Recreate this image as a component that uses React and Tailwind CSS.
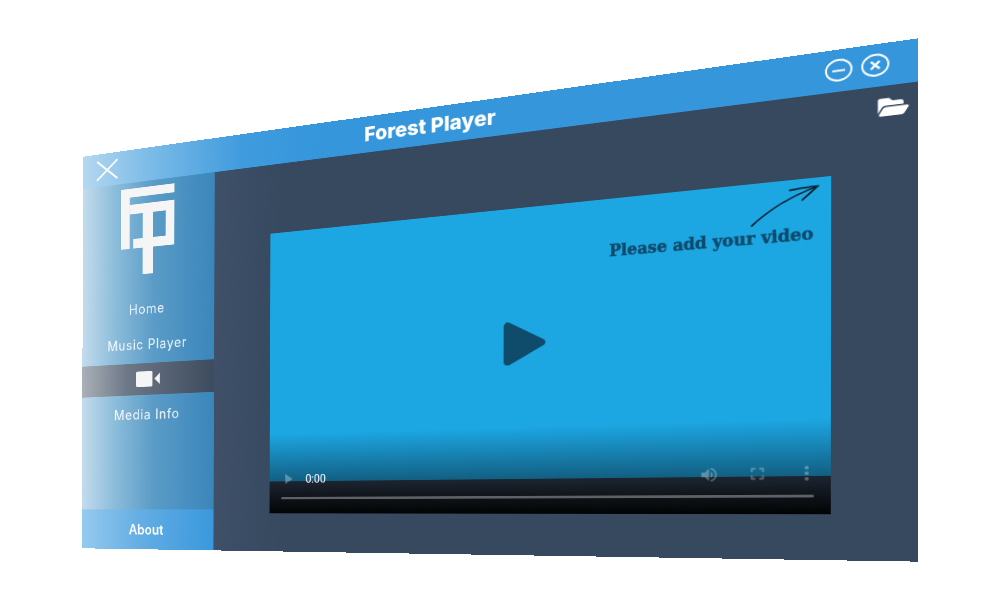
import React from "react";
import { FaFolderOpen } from "react-icons/fa";
import { MdPlayArrow, MdVolumeUp, MdFullscreen, MdMoreVert } from "react-icons/md";

const WIN_W = 1000;
const WIN_H = 544;

// corners of the tilted window on the page: top-left, top-right, bottom-right, bottom-left
const CORNERS = [
  [83.3, 156.7],
  [918.3, 38.3],
  [918, 561.7],
  [81.7, 548.3],
];

// maps the flat window rectangle on to the four corners
const tiltMatrix = () => {
  const [[x0, y0], [x1, y1], [x2, y2], [x3, y3]] = CORNERS;
  const dx1 = x1 - x2;
  const dx2 = x3 - x2;
  const sx = x0 - x1 + x2 - x3;
  const dy1 = y1 - y2;
  const dy2 = y3 - y2;
  const sy = y0 - y1 + y2 - y3;
  const den = dx1 * dy2 - dx2 * dy1;
  const g = (sx * dy2 - dx2 * sy) / den;
  const h = (dx1 * sy - sx * dy1) / den;
  const a = x1 - x0 + g * x1;
  const b = x3 - x0 + h * x3;
  const d = y1 - y0 + g * y1;
  const e = y3 - y0 + h * y3;
  return `matrix3d(${a / WIN_W},${d / WIN_W},0,${g / WIN_W},${b / WIN_H},${e / WIN_H},0,${h / WIN_H},0,0,1,0,${x0},${y0},0,1)`;
};

const Logo = () => (
  <svg width="81" height="118" viewBox="0 0 81 118" fill="#f5f5f5" className="mt-2 shrink-0">
    <rect x="0" y="0" width="13.5" height="82" />
    <rect x="0" y="0" width="81" height="12" />
    <rect x="13.5" y="22" width="67.5" height="13" />
    <rect x="33.5" y="22" width="15.5" height="96" />
    <rect x="68" y="22" width="13" height="60" />
    <rect x="19" y="69" width="62" height="13" />
  </svg>
);

const NavItem = ({ children, active }) => (
  <div
    className={`h-[43px] w-full flex items-center justify-center text-[18px] tracking-[1px] text-white/90 ${
      active ? "bg-[linear-gradient(90deg,#aab0b7_0%,#6d7887_35%,#3d4b5e_100%)]" : ""
    }`}
  >
    {children}
  </div>
);

const App = () => {
  return (
    <div className="w-[1000px] h-[600px] bg-white overflow-hidden font-['Inter',sans-serif]">
      <div
        className="w-[1000px] h-[544px] origin-top-left flex flex-col"
        style={{ transform: tiltMatrix() }}
      >
        {/* Title bar */}
        <div className="h-[45px] shrink-0 relative flex items-center justify-center pr-[30px] bg-[linear-gradient(90deg,#b4d8f0_0%,#7dbce8_10%,#3f9bdd_24%,#3596dc_35%)]">
          <svg width="34" height="28" viewBox="0 0 34 28" className="absolute left-[21px] top-[9px]" stroke="#ffffff" strokeWidth="2.6" fill="none">
            <path d="M1 1L33 27M33 1L1 27" />
          </svg>
          <span className="text-[25px] leading-none font-extrabold text-white">Forest Player</span>
          <div className="absolute right-[26px] top-[10px] flex gap-[8px]">
            <svg width="26" height="24" viewBox="0 0 26 24" stroke="#ffffff" strokeWidth="1.8" fill="none">
              <ellipse cx="13" cy="12" rx="12" ry="11" />
              <path d="M7 12.5H19" strokeWidth="2" />
            </svg>
            <svg width="26" height="24" viewBox="0 0 26 24" stroke="#ffffff" strokeWidth="1.8" fill="none">
              <ellipse cx="13" cy="12" rx="12" ry="11" />
              <path d="M9 8L17 16M17 8L9 16" strokeWidth="2.4" />
            </svg>
          </div>
        </div>

        <div className="flex-1 flex min-h-0">
          {/* Sidebar */}
          <div className="w-[200px] shrink-0 flex flex-col items-center bg-[linear-gradient(90deg,#c3dcec_0%,#8dbddb_25%,#5b9cc7_55%,#3a86bb_100%)]">
            <Logo />
            <div className="mt-[26px] w-full flex flex-col gap-[4.5px]">
              <NavItem>Home</NavItem>
              <NavItem>Music Player</NavItem>
              <NavItem active>
                <svg width="36" height="21" viewBox="0 0 36 21" fill="#f5f5f5" className="ml-[3px]">
                  <rect x="0" y="0" width="25" height="21" rx="2" />
                  <path d="M28 10.5L36 3V18Z" />
                </svg>
              </NavItem>
              <NavItem>Media Info</NavItem>
            </div>
            <div className="mt-auto h-[54px] w-full flex items-center justify-center text-[18px] font-semibold text-white bg-[linear-gradient(90deg,#96caee_0%,#64aee4_45%,#3a98dd_100%)]">
              About
            </div>
          </div>

          {/* Main area */}
          <div className="flex-1 flex flex-col bg-[linear-gradient(90deg,#3f5068_0%,#36495f_12%)]">
            <div className="h-[35px] shrink-0 flex justify-end items-end pr-[7px]">
              <FaFolderOpen className="w-[31px] h-[25px] text-white" />
            </div>
            <div className="ml-[79px] mt-[54px] w-[641px] h-[361px] relative flex flex-col bg-[#1ca6e2]">
              <div className="h-[320px] shrink-0 flex items-center justify-center bg-[linear-gradient(180deg,#1ca6e2_0%,#1ca6e2_81%,#125f82_100%)]">
                <svg width="50" height="52" viewBox="0 0 50 52" fill="#0f4c6c">
                  <path d="M3 1.5C4 0 6 0 8 1L47 22.5C50 24.5 50 27.5 47 29.5L8 51C5 52.5 1 51 1 47V5C1 3.5 2 2.5 3 1.5Z" />
                </svg>
              </div>
              <div className="flex-1 relative bg-[linear-gradient(180deg,#1c2530_0%,#11161d_45%,#020304_100%)]">
                <div className="absolute left-[16px] right-[16px] top-[20px] h-[3px] rounded-full bg-[#5f6265]" />
              </div>

              {/* Native style video controls */}
              <div className="absolute left-[14px] right-[11px] top-[305px] h-[24px] flex items-center text-white/30">
                <MdPlayArrow className="w-[22px] h-[22px]" />
                <span className="ml-[13px] text-[14px] leading-none font-['Roboto',sans-serif] text-white">0:00</span>
                <MdVolumeUp className="ml-auto w-[21px] h-[21px]" />
                <MdFullscreen className="ml-[27px] w-[22px] h-[22px]" />
                <MdMoreVert className="ml-[25px] w-[24px] h-[24px]" />
              </div>

              {/* Hint pointing at the folder button */}
              <span className="absolute left-[416px] top-[50px] whitespace-nowrap text-[19px] leading-none font-bold text-[#0f4a6b] font-['DejaVu_Serif_Condensed','DejaVu_Serif',serif] [-webkit-text-stroke:0.5px_#0f4a6b]">
                Please add your video
              </span>
              <svg width="641" height="60" viewBox="0 0 641 60" className="absolute left-0 top-0" stroke="#0b2233" strokeWidth="1.8" fill="none" strokeLinecap="round">
                <path d="M564 46Q589 22 628 9.5" />
                <path d="M601.5 11Q615 9 628 9.5Q620 17 613.5 22.7" />
              </svg>
            </div>
          </div>
        </div>
      </div>
    </div>
  );
};

export default App;
